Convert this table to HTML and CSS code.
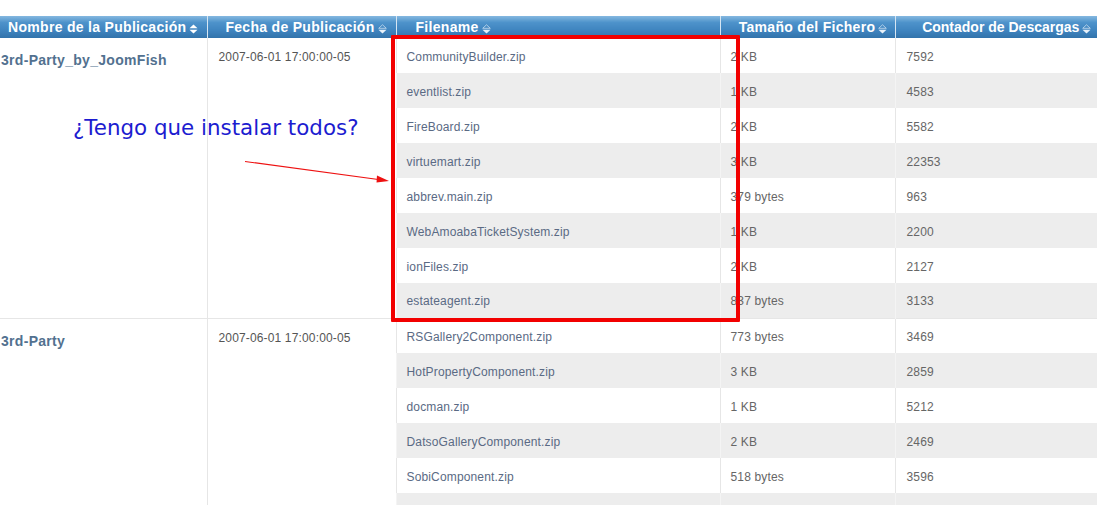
FILE: index.html
```html
<!DOCTYPE html>
<html lang="es">
<head>
<meta charset="utf-8">
<title>Descargas</title>
<link rel="stylesheet" href="styles.css">
</head>
<body>
<div class="page">
  <table class="downloads">
    <colgroup>
      <col class="c1"><col class="c2"><col class="c3"><col class="c4"><col class="c5">
    </colgroup>
    <thead>
      <tr>
        <th>Nombre de la Publicación<svg class="sort" viewBox="0 0 9 10"><polygon points="4.5,0.5 8.5,4.3 0.5,4.3" fill="#fff"/><polygon points="0.5,5.7 8.5,5.7 4.5,9.5" fill="#fff"/></svg></th>
        <th class="date-h">Fecha de Publicación<svg class="sort" viewBox="0 0 9 10"><polygon points="4.5,0.8 8.3,4.3 0.7,4.3" fill="none" stroke="#c9def0" stroke-width="0.8"/><polygon points="0.5,5.7 8.5,5.7 4.5,9.5" fill="#e8f1f9"/></svg></th>
        <th class="left">Filename<svg class="sort" viewBox="0 0 9 10"><polygon points="4.5,0.8 8.3,4.3 0.7,4.3" fill="none" stroke="#c9def0" stroke-width="0.8"/><polygon points="0.5,5.7 8.5,5.7 4.5,9.5" fill="#e8f1f9"/></svg></th>
        <th class="size-h">Tamaño del Fichero<svg class="sort" viewBox="0 0 9 10"><polygon points="4.5,0.8 8.3,4.3 0.7,4.3" fill="none" stroke="#c9def0" stroke-width="0.8"/><polygon points="0.5,5.7 8.5,5.7 4.5,9.5" fill="#e8f1f9"/></svg></th>
        <th class="last">Contador de Descargas<svg class="sort" viewBox="0 0 9 10"><polygon points="4.5,0.8 8.3,4.3 0.7,4.3" fill="none" stroke="#c9def0" stroke-width="0.8"/><polygon points="0.5,5.7 8.5,5.7 4.5,9.5" fill="#e8f1f9"/></svg></th>
      </tr>
    </thead>
    <tbody>
      <tr>
        <td class="group" rowspan="8">3rd-Party_by_JoomFish</td>
        <td class="date" rowspan="8">2007-06-01 17:00:00-05</td>
        <td class="file">CommunityBuilder.zip</td><td class="size">2 KB</td><td class="count">7592</td>
      </tr>
      <tr class="alt"><td class="file">eventlist.zip</td><td class="size">1 KB</td><td class="count">4583</td></tr>
      <tr><td class="file">FireBoard.zip</td><td class="size">2 KB</td><td class="count">5582</td></tr>
      <tr class="alt"><td class="file">virtuemart.zip</td><td class="size">3 KB</td><td class="count">22353</td></tr>
      <tr><td class="file">abbrev.main.zip</td><td class="size">379 bytes</td><td class="count">963</td></tr>
      <tr class="alt"><td class="file">WebAmoabaTicketSystem.zip</td><td class="size">1 KB</td><td class="count">2200</td></tr>
      <tr><td class="file">ionFiles.zip</td><td class="size">2 KB</td><td class="count">2127</td></tr>
      <tr class="alt"><td class="file">estateagent.zip</td><td class="size">837 bytes</td><td class="count">3133</td></tr>
      <tr class="newgroup">
        <td class="group" rowspan="6">3rd-Party</td>
        <td class="date" rowspan="6">2007-06-01 17:00:00-05</td>
        <td class="file">RSGallery2Component.zip</td><td class="size">773 bytes</td><td class="count">3469</td>
      </tr>
      <tr class="alt"><td class="file">HotPropertyComponent.zip</td><td class="size">3 KB</td><td class="count">2859</td></tr>
      <tr><td class="file">docman.zip</td><td class="size">1 KB</td><td class="count">5212</td></tr>
      <tr class="alt"><td class="file">DatsoGalleryComponent.zip</td><td class="size">2 KB</td><td class="count">2469</td></tr>
      <tr><td class="file">SobiComponent.zip</td><td class="size">518 bytes</td><td class="count">3596</td></tr>
      <tr class="alt"><td class="file">&nbsp;</td><td class="size">&nbsp;</td><td class="count">&nbsp;</td></tr>
    </tbody>
  </table>

  <div class="note">¿Tengo que instalar todos?</div>
  <svg class="arrow" width="1097" height="505" viewBox="0 0 1097 505">
    <line x1="245" y1="161.5" x2="382" y2="180" stroke="#ee1111" stroke-width="1.2"/>
    <polygon points="389,181 377,175.5 376.5,182.5" fill="#ee1111"/>
  </svg>
  <div class="highlight"></div>
</div>
</body>
</html>
```

FILE: styles.css
```css
html, body {
  margin: 0;
  padding: 0;
  background: #fff;
  overflow: hidden;
}

.page {
  position: relative;
  width: 1097px;
  height: 505px;
  padding-top: 16px;
  box-sizing: border-box;
  font-family: "Liberation Sans", Arial, sans-serif;
}

.downloads {
  width: 1110px;
  border-collapse: collapse;
  table-layout: fixed;
}

.c1 { width: 207px; }
.c2 { width: 189px; }
.c3 { width: 324px; }
.c4 { width: 175px; }
.c5 { width: 215px; }

.downloads th {
  height: 22px;
  padding: 0;
  box-sizing: border-box;
  color: #fff;
  font-size: 14px;
  font-weight: bold;
  letter-spacing: 0.3px;
  text-align: center;
  white-space: nowrap;
  background: linear-gradient(to bottom, #85b8e0 0%, #4d92ca 30%, #3f84bf 65%, #3273ab 100%);
  border-left: 1px solid #d6e6f3;
  line-height: 21px;
}

.downloads th:first-child { border-left: none; }
.downloads th.date-h { padding-left: 9px; }
.downloads th.left { text-align: left; padding-left: 19px; }
.downloads th.size-h { padding-left: 11px; }
.downloads th.last { letter-spacing: 0; padding-left: 8px; }

.sort {
  width: 9px;
  height: 10px;
  margin-left: 3px;
  vertical-align: -2px;
}

.downloads td {
  height: 35px;
  padding: 2px 10px 0;
  box-sizing: border-box;
  font-size: 12px;
  letter-spacing: 0.15px;
  color: #666;
  border-left: 1px solid #e6e6e6;
  white-space: nowrap;
}

.downloads tr.alt td { background: #ededed; border-left-color: #f4f4f4; }

.downloads td.group {
  vertical-align: top;
  padding: 14px 0 0 1px;
  border-left: none;
  background: #fff;
  font-size: 14px;
  font-weight: bold;
  letter-spacing: 0.3px;
  color: #52718f;
}

.downloads td.date {
  vertical-align: top;
  padding: 12px 0 0 11px;
  background: #fff;
  color: #555;
  letter-spacing: 0.15px;
}

.downloads tr.newgroup td { border-top: 1px solid #e6e6e6; }

.downloads td.file { color: #5a6a84; }
.downloads td.count { padding-left: 11px; }

.note {
  position: absolute;
  left: 73px;
  top: 115px;
  font-family: "DejaVu Sans", Verdana, sans-serif;
  font-size: 21.4px;
  color: #1c1cd0;
  white-space: nowrap;
}

.arrow {
  position: absolute;
  left: 0;
  top: 0;
  pointer-events: none;
}

.highlight {
  position: absolute;
  left: 391px;
  top: 35px;
  width: 349px;
  height: 287px;
  box-sizing: border-box;
  border: 4px solid #f20000;
  border-radius: 1px;
}
```
